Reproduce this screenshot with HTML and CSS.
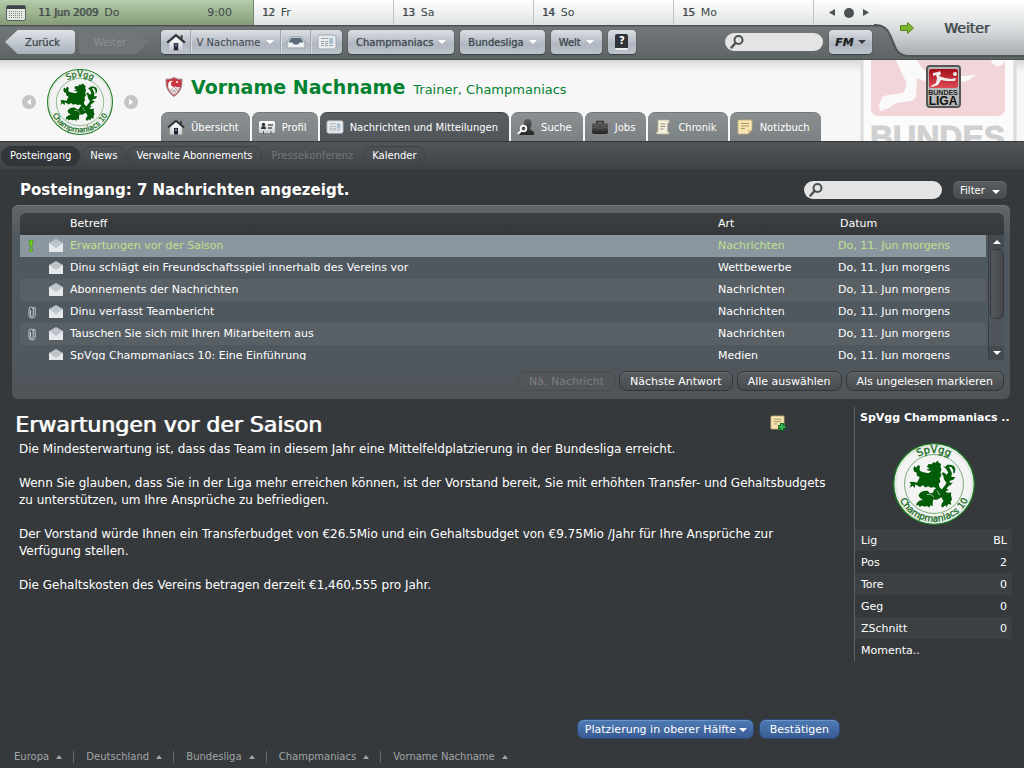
FILE: index.html
```html
<!DOCTYPE html>
<html lang="de">
<head>
    <meta charset="UTF-8">
    <meta name="viewport" content="width=device-width, initial-scale=1.0">
    <title>Posteingang - Vorname Nachname</title>
    <link rel="stylesheet" href="styles.css">
</head>
<body>
    <!-- shared icons -->
    <svg class="defs" aria-hidden="true">
        <defs>
            <linearGradient id="silver" x1="0" y1="0" x2="0" y2="1">
                <stop offset="0" stop-color="#ffffff"/><stop offset="1" stop-color="#c9ced4"/>
            </linearGradient>
            <linearGradient id="dark" x1="0" y1="0" x2="0" y2="1">
                <stop offset="0" stop-color="#5c5c5c"/><stop offset="1" stop-color="#252525"/>
            </linearGradient>
            <linearGradient id="red" x1="0" y1="0" x2="0" y2="1">
                <stop offset="0" stop-color="#a5101a"/><stop offset="1" stop-color="#dc4a55"/>
            </linearGradient>
            <path id="arc-top" d="M29 121A92 92 0 0 1 213 121"/>
            <path id="arc-bottom" d="M10 121A111 111 0 0 0 232 121"/>
        </defs>
        <symbol id="crest" viewBox="0 0 242 242">
            <circle cx="121" cy="121" r="119" fill="#f3f3f3" stroke="#1b7a22" stroke-width="4"/>
            <circle cx="121" cy="121" r="113" fill="none" stroke="#8fbd92" stroke-width="1"/>
            <circle cx="121" cy="121" r="87" fill="none" stroke="#3d8f43" stroke-width="2"/>
            <path fill="#035c08" d="M98 78L108 76 100 70 105 62 115 63 118 57 126 58 131 52 135 58 142 62 140 70 143 78 140 88 143 96 137 105 140 113 135 122 137 130 144 137 152 127 158 118 151 108 148 96 143 88 150 87 158 94 163 88 158 78 148 68 155 70 160 64 170 64 180 68 184 76 183 86 178 91 178 80 172 71 165 70 170 80 174 90 172 100 184 100 179 108 167 112 168 118 177 116 170 124 163 128 158 136 165 138 155 143 160 147 172 146 171 154 174 166 170 174 172 182 163 180 158 189 154 184 147 190 142 187 144 178 149 172 143 160 134 165 127 168 119 166 117 178 118 186 111 184 107 190 100 186 94 188 86 185 78 189 76 183 68 185 70 177 79 170 88 168 80 162 75 155 80 147 90 142 102 141 109 148 118 147 121 138 127 134 121 130 112 132 104 128 96 131 88 125 80 130 73 126 66 122 64 133 58 126 49 132 53 122 49 116 55 114 62 115 71 117 76 107 79 101 70 96 70 88 62 84 60 74 64 68 68 73 75 64 80 70 78 77 80 83 90 86 104 89 112 84Z"/>
            <path stroke="#f3f3f3" stroke-width="2" fill="none" d="M100 152q16-3 20 8M130 140l8 14M112 82l-8 4"/>
        </symbol>
        <symbol id="icon-home" viewBox="0 0 18 16">
            <path d="M3 8L9 3l6 5v7.500H3z" fill="url(#silver)" stroke="#b9bdc2" stroke-width=".5"/>
            <path d="M13 2h2v4l-2-2z" fill="#444"/>
            <path d="M1 8.500L9 1.800l8 6.700" fill="none" stroke="#303438" stroke-width="2"/>
            <path d="M7 9h4v6.500H7z" fill="#24282c"/><path d="M8 10h2v2H8z" fill="#4e7fae"/>
        </symbol>
        <symbol id="icon-news" viewBox="0 0 20 16">
            <rect x="1" y="1" width="18" height="14" rx="2" fill="#e9ecef" stroke="#a2a9b1"/>
            <path d="M4 4.500h7M4 7.500h3M4 9.500h3M4 11.500h3M8 7.500h3M8 9.500h3M8 11.500h3M12 11.500h4" stroke="#9aa3ac"/>
            <rect x="12" y="4" width="4" height="6" fill="#a9bfd3"/>
        </symbol>
        <symbol id="icon-inbox" viewBox="0 0 20 14">
            <path d="M4 2h12l3 6v4q0 1-1 1H2q-1 0-1-1V8z" fill="#eef0f2" stroke="#9097a0"/>
            <path d="M5 3h10l2.500 4.500h-4L12 9.500H8L6.500 7.500h-4z" fill="#59687a"/>
        </symbol>
        <symbol id="icon-profile" viewBox="0 0 18 16">
            <rect x="1" y="2" width="16" height="12" rx="1.500" fill="url(#silver)"/>
            <circle cx="5.500" cy="5.500" r="1.700" fill="#333"/><path d="M3 10q0-3 2.500-3T8 10z" fill="#333"/>
            <path d="M10 6h5M10 9h4" stroke="#555" stroke-width="1.300"/>
            <path d="M5.500 12v3M13 12v3" stroke="#555"/>
        </symbol>
        <symbol id="icon-scout" viewBox="0 0 18 18">
            <path d="M11 1c3 0 4 3 3.500 6L13 11l4 3q1 3-1 3H3q-2 0-1-2l6-4q-2-4-1-7 1-3 4-3z" fill="url(#dark)"/>
            <circle cx="6.500" cy="10.500" r="2.800" fill="#555" stroke="#fff" stroke-width="1.800"/><path d="M4.500 12.500L1 16" stroke="#fff" stroke-width="2"/>
        </symbol>
        <symbol id="icon-jobs" viewBox="0 0 18 16">
            <path d="M6 5V2.500h6V5" fill="none" stroke="#303030" stroke-width="1.600"/>
            <rect x="1" y="4" width="16" height="11" rx="2" fill="url(#dark)"/>
            <path d="M1 8q8 3 16 0" fill="none" stroke="#666" stroke-width=".6"/>
        </symbol>
        <symbol id="icon-scroll" viewBox="0 0 16 16">
            <path d="M3 1h11v3h-1.500v9H14v2H3q-2 0-2-2h2V1z" fill="#f4efdc" stroke="#bdb496" stroke-width=".7"/>
            <path d="M5.500 5h5M5.500 7.500h5M5.500 10h3" stroke="#96917e"/>
        </symbol>
        <symbol id="icon-note" viewBox="0 0 16 16">
            <path d="M2 1h12q1 0 1 1v9l-4 4H2q-1 0-1-1V2q0-1 1-1z" fill="#f6e5b3" stroke="#c4ae73" stroke-width=".8"/>
            <path d="M11 15v-4h4z" fill="#d9bf7b"/><path d="M4 4.500h8M4 7h8M4 9.500h4" stroke="#a8935d"/>
        </symbol>
        <symbol id="icon-search" viewBox="0 0 14 14">
            <circle cx="8.500" cy="5" r="4" fill="none" stroke="#4b5154" stroke-width="2"/>
            <path d="M5.500 8L1.500 12.500" stroke="#4b5154" stroke-width="2.500" stroke-linecap="round"/>
        </symbol>
        <symbol id="icon-mail" viewBox="0 0 14 14">
            <path d="M0 4L7 0l7 4v9H0z" fill="#bcc3cb"/>
            <path d="M0 4l7 5 7-5v9H0z" fill="#e6e9ec"/>
        </symbol>
        <symbol id="icon-clip" viewBox="0 0 8 13">
            <path d="M2.500 4v5q0 1.500 1.300 1.500T5.200 9V3Q5 1 6 1t1.200 2v6.500Q7 12 4 12T1 9.500V3q0-2 2-2t2.200 2" fill="none" stroke="#c3c8cc"/>
        </symbol>
    </svg>

    <header class="top">
        <nav class="days" aria-label="Kalender">
            <a class="day today" href="#">
                <svg class="calendar" viewBox="0 0 20 16"><rect x=".5" y=".5" width="19" height="15" rx="1.500" fill="#e4e8e2" stroke="#59605c"/><path d="M1 1h18v3H1z" fill="#3d4346"/><path d="M3 6.500h14M3 8.500h14M3 10.500h14M3 12.500h14" stroke="#7d8580" stroke-dasharray="1 1"/></svg>
                <b>11 Jun 2009</b> <span>Do</span> <time>9:00</time>
            </a>
            <a class="day" href="#"><b>12</b> <span>Fr</span></a>
            <a class="day" href="#"><b>13</b> <span>Sa</span></a>
            <a class="day" href="#"><b>14</b> <span>So</span></a>
            <a class="day" href="#"><b>15</b> <span>Mo</span></a>
            <div class="day pager">
                <button aria-label="Vorheriger Tag"><svg width="6" height="7" viewBox="0 0 6 7"><path d="M6 0v7L0 3.500z" fill="#4b5052"/></svg></button>
                <button aria-label="Heute"><svg width="10" height="10" viewBox="0 0 10 10"><circle cx="5" cy="5" r="5" fill="#4b5052"/></svg></button>
                <button aria-label="Nächster Tag"><svg width="6" height="7" viewBox="0 0 6 7"><path d="M0 0v7l6-3.500z" fill="#4b5052"/></svg></button>
            </div>
        </nav>
        <div class="toolbar">
            <button class="back">Zurück</button>
            <button class="forward" disabled>Weiter</button>
            <div class="tool group">
                <button aria-label="Startseite"><svg width="20" height="18"><use href="#icon-home"/></svg></button>
                <button class="manager">V Nachname <i class="caret"></i></button>
                <button aria-label="Posteingang"><svg width="20" height="14"><use href="#icon-inbox"/></svg></button>
                <button aria-label="Nachrichten"><svg width="20" height="16"><use href="#icon-news"/></svg></button>
            </div>
            <button class="tool menu">Champmaniacs <i class="caret"></i></button>
            <button class="tool menu">Bundesliga <i class="caret"></i></button>
            <button class="tool menu">Welt <i class="caret"></i></button>
            <button class="tool help" aria-label="Hilfe"><span>?</span></button>
            <label class="search top-search"><svg width="14" height="14"><use href="#icon-search"/></svg><input type="search" aria-label="Suche"></label>
            <button class="tool fm"><em>FM</em> <i class="caret dark"></i></button>
        </div>
        <button class="continue">
            <svg class="continue-bg" viewBox="0 0 160 60" preserveAspectRatio="none">
                <defs><linearGradient id="corner" x1="0" y1="0" x2="0" y2="1"><stop offset="0" stop-color="#ffffff"/><stop offset=".45" stop-color="#dfe2e3"/><stop offset="1" stop-color="#a5acaf"/></linearGradient></defs>
                <path d="M10 0H160V56H44Q36 56 32 49L26 35Q22 25 12 25H10Z" fill="url(#corner)"/>
                <path d="M10 25H12Q22 25 26 35L32 49Q36 56 44 56H160" fill="none" stroke="#4e5456" stroke-width="2"/>
            </svg>
            <svg class="arrow" viewBox="0 0 14 12"><path d="M.5 3.500h7v-3L13.500 6l-6 5.500v-3h-7z" fill="#7db52c" stroke="#56861a"/></svg>
            <span>Weiter</span>
        </button>
    </header>

    <section class="banner">
        <div class="switcher">
            <button aria-label="Zurückblättern"><svg width="14" height="14" viewBox="0 0 14 14"><circle cx="7" cy="7" r="7" fill="#c4c4c4"/><path d="M9 3.500v7L5 7z" fill="#fff"/></svg></button>
            <svg width="66" height="66" viewBox="0 0 242 242" class="crest">
                <use href="#crest"/>
                <text class="crest-name"><textPath href="#arc-top" startOffset="50%">SpVgg</textPath></text>
                <text><textPath href="#arc-bottom" startOffset="50%">Champmaniacs 10</textPath></text>
            </svg>
            <button aria-label="Weiterblättern"><svg width="14" height="14" viewBox="0 0 14 14"><circle cx="7" cy="7" r="7" fill="#c4c4c4"/><path d="M5 3.500v7L9 7z" fill="#fff"/></svg></button>
        </div>
        <div class="identity">
            <h1>
                <svg width="18" height="20" viewBox="0 0 18 20"><path d="M1 2q4 1 8-1.500Q13 3 17 2q1 12-8 17.500Q0 14 1 2z" fill="#c93540" stroke="#9d8f91"/><path d="M3 10h12q-1 5-6 8-5-3-6-8z" fill="#dedada"/><path d="M8 4a3 3 0 1 0 3 5 4 4 0 1 1-3-5z" fill="#fff"/><path d="M5 14l4-4 4 4M7 16l2-3 2 3" fill="none" stroke="#a99" stroke-width=".8"/><circle cx="12" cy="5" r="1" fill="#fff"/></svg>
                <strong>Vorname Nachname</strong> <small>Trainer, Champmaniacs</small>
            </h1>
            <nav class="tabs">
                <a href="#"><svg width="18" height="16"><use href="#icon-home"/></svg>Übersicht</a>
                <a href="#"><svg width="18" height="16"><use href="#icon-profile"/></svg>Profil</a>
                <a href="#" class="active"><svg width="18" height="16"><use href="#icon-news"/></svg>Nachrichten und Mitteilungen</a>
                <a href="#"><svg width="18" height="18"><use href="#icon-scout"/></svg>Suche</a>
                <a href="#"><svg width="18" height="16"><use href="#icon-jobs"/></svg>Jobs</a>
                <a href="#"><svg width="18" height="16"><use href="#icon-scroll"/></svg>Chronik</a>
                <a href="#"><svg width="18" height="16"><use href="#icon-note"/></svg>Notizbuch</a>
            </nav>
        </div>
        <svg class="league" viewBox="-3 0 166 81">
            <path d="M1 0H154V81H1z" fill="#fbfbfb"/>
            <path d="M1 0v81M154 0v81" stroke="#dcdcdc" stroke-width="3"/>
            <path d="M10 0h134v48q0 8-8 8H18q-8 0-8-8z" fill="#f1d5d8"/>
            <path d="M35 0H56Q60 10 70 14L100 16 115 15 108 20 100 22 95 18 72 24 56 18 55 36Q54 40 50 41L35 43 28 48 19 51 18 46 21 37 27 35 42 33Q46 28 45 22 40 12 35 0Z" fill="#fafafa"/>
            <circle cx="137" cy="-1" r="7" fill="#fafafa"/>
            <text x="9" y="88" class="league-wordmark">BUNDES</text>
            <rect x="66" y="6" width="33" height="41" rx="3" fill="#b7b8b8" stroke="#555" stroke-width="2"/>
            <rect x="68" y="9" width="29" height="19" rx="2" fill="url(#red)"/>
            <path d="M72 13l5-1 2-1 1 3-2 2 6 2 6 1 5-1-1 3-9 0-5-1-3 5-6 2-1-1 5-3 1-5-1-3-3 1z" fill="#eee"/><circle cx="94" cy="14" r="2" fill="#eee"/>
            <text x="82" y="35" class="league-small">BUNDES</text>
            <text x="82" y="45" class="league-big">LIGA</text>
        </svg>
    </section>

    <nav class="subnav">
        <a href="#" class="active">Posteingang</a>
        <a href="#">News</a>
        <a href="#">Verwalte Abonnements</a>
        <a class="disabled">Pressekonferenz</a>
        <a href="#">Kalender</a>
    </nav>

    <main>
        <div class="title-row">
            <h2>Posteingang: 7 Nachrichten angezeigt.</h2>
            <label class="search inbox-search"><svg width="14" height="14"><use href="#icon-search"/></svg><input type="search" aria-label="Nachrichten durchsuchen"></label>
            <button class="btn filter">Filter <i class="caret"></i></button>
        </div>

        <section class="inbox">
            <div class="list">
                <table>
                    <thead>
                        <tr><th class="flag"></th><th class="mail"></th><th>Betreff</th><th class="kind">Art</th><th class="date">Datum</th><th class="end"></th></tr>
                    </thead>
                    <tbody>
                        <tr class="selected"><td class="flag"><svg width="6" height="12" viewBox="0 0 6 12"><path d="M1 0h4L4 7H2zM1.500 9h3v3h-3z" fill="#6ed01e" stroke="#2f7d0d" stroke-width=".5"/></svg></td><td><svg width="14" height="14"><use href="#icon-mail"/></svg></td><td>Erwartungen vor der Saison</td><td>Nachrichten</td><td>Do, 11. Jun morgens</td><td class="end"></td></tr>
                        <tr><td></td><td><svg width="14" height="14"><use href="#icon-mail"/></svg></td><td>Dinu schlägt ein Freundschaftsspiel innerhalb des Vereins vor</td><td>Wettbewerbe</td><td>Do, 11. Jun morgens</td><td class="end"></td></tr>
                        <tr><td></td><td><svg width="14" height="14"><use href="#icon-mail"/></svg></td><td>Abonnements der Nachrichten</td><td>Nachrichten</td><td>Do, 11. Jun morgens</td><td class="end"></td></tr>
                        <tr><td class="flag"><svg width="8" height="13"><use href="#icon-clip"/></svg></td><td><svg width="14" height="14"><use href="#icon-mail"/></svg></td><td>Dinu verfasst Teambericht</td><td>Nachrichten</td><td>Do, 11. Jun morgens</td><td class="end"></td></tr>
                        <tr><td class="flag"><svg width="8" height="13"><use href="#icon-clip"/></svg></td><td><svg width="14" height="14"><use href="#icon-mail"/></svg></td><td>Tauschen Sie sich mit Ihren Mitarbeitern aus</td><td>Nachrichten</td><td>Do, 11. Jun morgens</td><td class="end"></td></tr>
                        <tr><td></td><td><svg width="14" height="14"><use href="#icon-mail"/></svg></td><td>SpVgg Champmaniacs 10: Eine Einführung</td><td>Medien</td><td>Do, 11. Jun morgens</td><td class="end"></td></tr>
                    </tbody>
                </table>
                <div class="scrollbar">
                    <button aria-label="Nach oben"><i class="caret up"></i></button>
                    <div class="thumb"></div>
                    <button aria-label="Nach unten"><i class="caret"></i></button>
                </div>
            </div>
            <div class="actions">
                <button class="btn" disabled>Nä. Nachricht</button>
                <button class="btn">Nächste Antwort</button>
                <button class="btn">Alle auswählen</button>
                <button class="btn">Als ungelesen markieren</button>
            </div>
        </section>

        <div class="reader">
            <article>
                <div class="article-head">
                    <h2>Erwartungen vor der Saison</h2>
                    <button aria-label="Notiz hinzufügen"><svg width="16" height="16" viewBox="0 0 16 16"><use href="#icon-note" width="15" height="15"/><path d="M9.500 9.500v-2h3v2h2v3h-2v2h-3v-2h-2v-3z" transform="translate(1 1)" fill="#35b552" stroke="#0c5f22"/></svg></button>
                </div>
                <p>Die Mindesterwartung ist, dass das Team in diesem Jahr eine Mittelfeldplatzierung in der Bundesliga erreicht.</p>
                <p>Wenn Sie glauben, dass Sie in der Liga mehr erreichen können, ist der Vorstand bereit, Sie mit erhöhten Transfer- und Gehaltsbudgets zu unterstützen, um Ihre Ansprüche zu befriedigen.</p>
                <p>Der Vorstand würde Ihnen ein Transferbudget von €26.5Mio und ein Gehaltsbudget von €9.75Mio /Jahr für Ihre Ansprüche zur Verfügung stellen.</p>
                <p>Die Gehaltskosten des Vereins betragen derzeit €1,460,555 pro Jahr.</p>
                <div class="reply">
                    <span class="choice"><select class="btn blue" aria-label="Antwort"><option>Platzierung in oberer Hälfte</option></select><i class="caret"></i></span>
                    <button class="btn blue">Bestätigen</button>
                </div>
            </article>
            <aside>
                <h3>SpVgg Champmaniacs ..</h3>
                <svg width="82" height="82" viewBox="0 0 242 242" class="crest">
                    <use href="#crest"/>
                    <text class="crest-name"><textPath href="#arc-top" startOffset="50%">SpVgg</textPath></text>
                    <text><textPath href="#arc-bottom" startOffset="50%">Champmaniacs 10</textPath></text>
                </svg>
                <table class="stats">
                    <tr><th>Lig</th><td>BL</td></tr>
                    <tr><th>Pos</th><td>2</td></tr>
                    <tr><th>Tore</th><td>0</td></tr>
                    <tr><th>Geg</th><td>0</td></tr>
                    <tr><th>ZSchnitt</th><td>0</td></tr>
                    <tr><th>Momenta..</th><td></td></tr>
                </table>
            </aside>
        </div>
    </main>

    <footer>
        <button>Europa <i class="caret up"></i></button>
        <button>Deutschland <i class="caret up"></i></button>
        <button>Bundesliga <i class="caret up"></i></button>
        <button>Champmaniacs <i class="caret up"></i></button>
        <button>Vorname Nachname <i class="caret up"></i></button>
    </footer>
</body>
</html>
```

FILE: styles.css
```css
* {
    box-sizing: border-box;
}

body {
    margin: 0;
    min-height: 100vh;
    display: flex;
    flex-direction: column;
    background: #36393c;
    color: #fff;
    font-family: "DejaVu Sans", sans-serif;
    font-size: 11px;
}

a {
    color: inherit;
    text-decoration: none;
}

button, input, select {
    font: inherit;
    color: inherit;
}

button {
    background: none;
    border: 0;
    padding: 0;
    white-space: nowrap;
    cursor: pointer;
}

h1, h2, h3, p {
    margin: 0;
    font-weight: normal;
}

svg {
    display: block;
    flex: none;
}

.defs {
    position: absolute;
    width: 0;
    height: 0;
}

.crest text {
    font-size: 27px;
    text-anchor: middle;
    fill: #146d1b;
    stroke: #146d1b;
}

.crest .crest-name {
    font-size: 30px;
}

.caret {
    display: inline-block;
    border: 4px solid transparent;
    border-top-color: #fff;
    border-bottom: 0;
}

.caret.dark {
    border-top-color: #35393b;
}

.caret.up {
    border-bottom: 4px solid currentColor;
    border-top: 0;
}

/* top bars */
.top {
    position: relative;
    color: #3d4749;
}

.days {
    display: grid;
    grid-template-columns: 254fr 140fr 140fr 140fr 140fr 210fr;
    height: 25px;
    background: linear-gradient(#fff, #dfe2e3);
}

.day {
    display: flex;
    align-items: center;
    gap: 6px;
    padding: 0 8px;
    border-right: 1px solid #c0c4c5;
    font-size: 11px;
}

.day b {
    font-size: 10px;
    font-weight: normal;
    text-shadow: 1px 0 rgba(61, 71, 73, .7);
}

.today {
    padding: 0 21px 0 6px;
    background: linear-gradient(#b4ccaa, #869c78);
    border-color: #72856a;
}

.today b {
    margin-left: 6px;
}

.today time {
    margin-left: auto;
}

.calendar {
    width: 20px;
    height: 16px;
}

.pager {
    padding-left: 15px;
    gap: 9px;
    border: 0;
}

.toolbar {
    display: flex;
    align-items: center;
    height: 35px;
    padding: 0 152px 0 5px;
    background: linear-gradient(#4b5052 0, #4b5052 1px, #727879 2px, #5e6365 100%);
    border-bottom: 1px solid #4a4e50;
    gap: 6px;
    font-size: 10px;
}

.back, .forward {
    width: 70px;
    height: 24px;
}

.back {
    padding-left: 5px;
    background: linear-gradient(#dfe3e8, #a9b0ba);
    text-shadow: 0 0 1px #626e78;
    border-radius: 0 4px 4px 0;
    clip-path: polygon(0 50%, 18% 0, 100% 0, 100% 100%, 18% 100%);
}

.forward {
    margin: 0 6px 0 -2px;
    padding-right: 8px;
    background: #707577;
    color: #8c9193;
    border-radius: 4px 0 0 4px;
    clip-path: polygon(0 0, 82% 0, 100% 50%, 82% 100%, 0 100%);
}

.tool {
    display: flex;
    align-items: center;
    justify-content: center;
    height: 24px;
    border-radius: 4px;
    background: linear-gradient(#dce0e5, #b1b7c2 60%, #bcc4ca);
    box-shadow: 0 1px 1px #3b4042, 0 0 1px #3b4042;
    text-shadow: 0 0 1px #626e78;
}

.group button {
    display: flex;
    align-items: center;
    justify-content: center;
    gap: 6px;
    width: 30px;
    height: 24px;
    border-right: 1px solid #a1a7af;
    box-shadow: 1px 0 #d5d9dd;
}

.group .manager {
    width: 90px;
}

.group button:last-child {
    width: 31px;
    border: 0;
    box-shadow: none;
}

.menu {
    gap: 5px;
    padding: 0 8px;
}

.help {
    width: 28px;
}

.help span {
    width: 13px;
    height: 16px;
    border-radius: 2px;
    background: #303438;
    border-bottom: 2px solid #eee;
    color: #fff;
    font-weight: bold;
    line-height: 14px;
    text-shadow: none;
}

.search {
    display: flex;
    align-items: center;
    height: 18px;
    padding: 0 5px;
    border-radius: 9px;
    background: #e4e4e4;
}

.search input {
    flex: 1;
    min-width: 0;
    border: 0;
    outline: 0;
    background: none;
    color: #333;
}

.top-search {
    width: 98px;
    margin-left: auto;
}

.fm {
    width: 43px;
    gap: 4px;
}

.fm em {
    font-weight: bold;
    font-size: 11px;
    color: #222;
}

.continue {
    position: absolute;
    top: 0;
    right: 0;
    width: 160px;
    height: 60px;
    display: flex;
    align-items: center;
    gap: 30px;
    padding: 0 0 4px 36px;
    font-size: 14px;
    text-shadow: 1px 0 rgba(61, 71, 73, .7);
}

.continue-bg {
    position: absolute;
    inset: 0;
    width: 160px;
    height: 60px;
}

.continue .arrow {
    position: relative;
    width: 14px;
    height: 12px;
}

.continue span {
    position: relative;
}

/* manager banner */
.banner {
    display: flex;
    height: 81px;
    background: linear-gradient(#d9d9d9, #f7f7f7 12px);
    color: #038232;
}

.switcher {
    display: flex;
    align-items: center;
    gap: 11px;
    width: 161px;
    padding: 2px 0 0 22px;
}

.identity {
    flex: 1;
    display: flex;
    flex-direction: column;
    justify-content: space-between;
}

.identity h1 {
    display: flex;
    align-items: baseline;
    gap: 8px;
    padding: 15px 0 0 4px;
    white-space: nowrap;
}

.identity h1 svg {
    align-self: center;
}

.identity strong {
    font-size: 19px;
    line-height: 24px;
}

.identity small {
    font-size: 13px;
}

.tabs {
    display: flex;
    gap: 2px;
    color: #fff;
    font-size: 10px;
}

.tabs a {
    display: flex;
    align-items: center;
    gap: 6px;
    height: 29px;
    padding: 0 11px 0 6px;
    border-radius: 7px 7px 0 0;
    background: linear-gradient(#8b8f91, #7c8183);
    border-top: 1px solid #74797b;
    white-space: nowrap;
}

.tabs .active {
    background: linear-gradient(#5a5f64, #505559);
    border-color: #3f4447;
}

.league {
    width: 166px;
    height: 81px;
}

.league text {
    font-family: "Liberation Sans", sans-serif;
    font-weight: bold;
}

.league-wordmark {
    font-size: 32px;
    fill: #d0d0d0;
    stroke: #d0d0d0;
}

.league .league-small {
    font-size: 7px;
    text-anchor: middle;
    fill: #222;
}

.league .league-big {
    font-size: 12px;
    text-anchor: middle;
    fill: #111;
}

.subnav {
    display: flex;
    align-items: center;
    gap: 1px;
    height: 30px;
    background: linear-gradient(#505559, #3e4245);
    border-top: 1px solid #34383a;
    border-bottom: 1px solid #2f3234;
    font-size: 10px;
}

.subnav a {
    padding: 0 8px;
    line-height: 18px;
    border: 1px solid #3c4144;
    border-radius: 10px;
}

.subnav .active {
    background: #32353a;
    border-color: #303336;
    margin-left: 1px;
}

.subnav .disabled {
    color: #73787a;
    border-color: transparent;
}

/* inbox */
main {
    flex: 1;
    display: flex;
    flex-direction: column;
}

.title-row {
    display: flex;
    align-items: center;
    height: 34px;
    padding: 4px 16px 0 20px;
}

.title-row h2 {
    flex: 1;
    font-size: 15px;
    font-weight: bold;
}

.inbox-search {
    width: 138px;
}

.btn {
    height: 20px;
    padding: 0 10px;
    border: 1px solid #33373a;
    border-radius: 7px;
    background: linear-gradient(#5a5e61, #474b4e);
    box-shadow: inset 0 1px #66696c;
}

.btn:disabled {
    color: #7b7f83;
    background: #535659;
    border-color: #484c50;
    box-shadow: none;
}

.filter {
    margin-left: 10px;
    padding: 0 7px;
    font-size: 10px;
}

.filter .caret {
    margin-left: 4px;
}

.inbox {
    margin: 0 14px 0 12px;
    padding: 7px 6px 8px 8px;
    border-radius: 6px;
    border-top: 1px solid #73787b;
    background: linear-gradient(#626669, #50585f 30px, #50585f 150px, #4f5457);
}

.list {
    position: relative;
    height: 147px;
    overflow: hidden;
    border-radius: 6px 6px 0 0;
}

.inbox table {
    width: 100%;
    table-layout: fixed;
    border-collapse: collapse;
}

.inbox th, .inbox td {
    padding: 0;
    height: 22px;
    line-height: 22px;
    text-align: left;
    font-weight: normal;
    white-space: nowrap;
}

.inbox th {
    background: linear-gradient(#3b3f42, #35383b);
}

.inbox .flag {
    width: 29px;
    padding-left: 8px;
}

.inbox .mail {
    width: 21px;
}

.inbox .kind {
    width: 120px;
}

.inbox .date {
    width: 148px;
    padding-left: 2px;
}

.inbox .end {
    width: 18px;
}

.inbox tbody tr:nth-child(odd) td:not(.end) {
    background: #585f65;
}

.inbox tbody tr.selected td:not(.end) {
    background: #8b979f;
    color: #bfe08a;
}

.scrollbar {
    position: absolute;
    top: 22px;
    right: 0;
    bottom: 0;
    width: 16px;
    display: flex;
    flex-direction: column;
    background: #50555c;
    border-left: 1px solid #3b3f43;
}

.scrollbar button {
    display: flex;
    align-items: center;
    justify-content: center;
    height: 14px;
    background: #454a4e;
}

.scrollbar button:last-child {
    margin-top: auto;
}

.thumb {
    height: 70px;
    margin-left: 1px;
    border: 1px solid #34383b;
    border-radius: 5px;
    background: linear-gradient(90deg, #54585c, #44484b);
}

.actions {
    display: flex;
    justify-content: flex-end;
    gap: 4px;
    padding-top: 11px;
}

/* message */
.reader {
    flex: 1;
    display: grid;
    grid-template-columns: 1fr 158px;
    gap: 14px;
    padding: 8px 12px 0 15px;
}

article {
    display: flex;
    flex-direction: column;
    font-size: 12px;
    line-height: 17px;
}

.article-head {
    display: flex;
    align-items: center;
    justify-content: space-between;
    padding: 2px 54px 0 0;
}

.article-head h2 {
    font-size: 22px;
    line-height: 32px;
    text-shadow: 1px 0 rgba(255, 255, 255, .8);
}

.article-head button {
    padding-bottom: 4px;
}

article p {
    padding: 0 8px 17px 4px;
}

.reply {
    display: flex;
    justify-content: flex-end;
    gap: 5px;
    margin-top: auto;
    padding-bottom: 7px;
    font-size: 11px;
}

.choice {
    position: relative;
}

.choice .caret {
    position: absolute;
    right: 7px;
    top: 9px;
    pointer-events: none;
}

.blue {
    border-color: #2c4a78;
    background: linear-gradient(#4d7bb5, #3a5c94);
    box-shadow: inset 0 1px #6a93c6;
}

select.blue {
    appearance: none;
    padding: 0 16px 0 7px;
}

aside {
    align-self: start;
    border-left: 1px solid #5f6365;
}

aside h3 {
    padding-left: 5px;
    font-size: 11px;
    font-weight: bold;
    line-height: 22px;
    white-space: nowrap;
}

aside > svg {
    margin: 14px auto 4px;
}

.stats {
    width: 100%;
    border-collapse: collapse;
}

.stats th, .stats td {
    height: 22px;
    padding: 0 5px 0 6px;
    font-weight: normal;
    text-align: left;
}

.stats td {
    text-align: right;
}

.stats tr:nth-child(odd) {
    background: #3c4043;
}

footer {
    display: flex;
    align-items: center;
    height: 22px;
    padding-left: 2px;
    color: #a0a4a6;
    font-size: 10px;
}

footer button {
    height: 12px;
    padding: 0 11px 0 12px;
    line-height: 12px;
    border-right: 1px solid #65696b;
}

footer button:last-child {
    border: 0;
}

footer .caret {
    margin-left: 4px;
    border-width: 0 3px 4px;
    vertical-align: 1px;
}
```
